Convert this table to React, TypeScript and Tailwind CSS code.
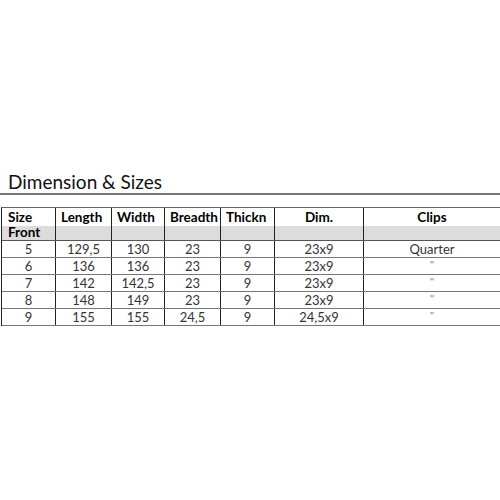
const columns = ['Size', 'Length', 'Width', 'Breadth', 'Thickn', 'Dim.', 'Clips'];

const rows = [
  ['5', '129,5', '130', '23', '9', '23x9', 'Quarter'],
  ['6', '136', '136', '23', '9', '23x9', '"'],
  ['7', '142', '142,5', '23', '9', '23x9', '"'],
  ['8', '148', '149', '23', '9', '23x9', '"'],
  ['9', '155', '155', '24,5', '9', '24,5x9', '"'],
];

const grid = 'grid grid-cols-[54px_56px_53px_56px_54px_89px_136px]';

export default function App() {
  return (
    <div
      className="h-[500px] w-[500px] bg-white text-[#222]"
      style={{ fontFamily: 'Lato, "Open Sans", sans-serif' }}
    >
      <div className="pt-[171px] pl-[8px] text-[19px] leading-[22px] text-[#111]">
        Dimension &amp; Sizes
      </div>
      <div className="h-[1.5px] bg-[#777]" />

      <div className="mt-[12px] ml-px border-t border-[#666] border-l border-l-[#222]">
        <div className={grid}>
          {columns.map((c, i) => (
            <div
              key={c}
              className={
                'h-[18px] pt-[1px] text-[13.5px] leading-[17px] font-bold text-black ' +
                (i < 6 ? 'border-r border-[#222] ' : '') +
                (i === 0 ? 'pl-[6px]' : i >= 5 ? 'text-center' : 'pl-[5px]')
              }
            >
              {c}
            </div>
          ))}
        </div>
        <div className={grid + ' border-b-[1.5px] border-[#555] bg-[#dcdcdc]'}>
          {columns.map((c, i) => (
            <div
              key={c}
              className={
                'h-[14px] text-[13.5px] leading-[13px] font-bold text-black ' +
                (i < 6 ? 'border-r border-[#222] ' : '') +
                'pl-[6px]'
              }
            >
              {i === 0 ? 'Front' : ''}
            </div>
          ))}
        </div>
        {rows.map((r) => (
          <div key={r[0]} className={grid + ' border-b border-[#777]'}>
            {r.map((v, i) => (
              <div
                key={i}
                className={
                  'h-[16px] text-center text-[13px] leading-[16px] text-[#333] ' +
                  (i < 6 ? 'border-r border-[#222]' : '')
                }
              >
                {v === '"' ? <span className="align-top text-[10px] leading-[12px] text-[#666]">''</span> : v}
              </div>
            ))}
          </div>
        ))}
      </div>
    </div>
  );
}
